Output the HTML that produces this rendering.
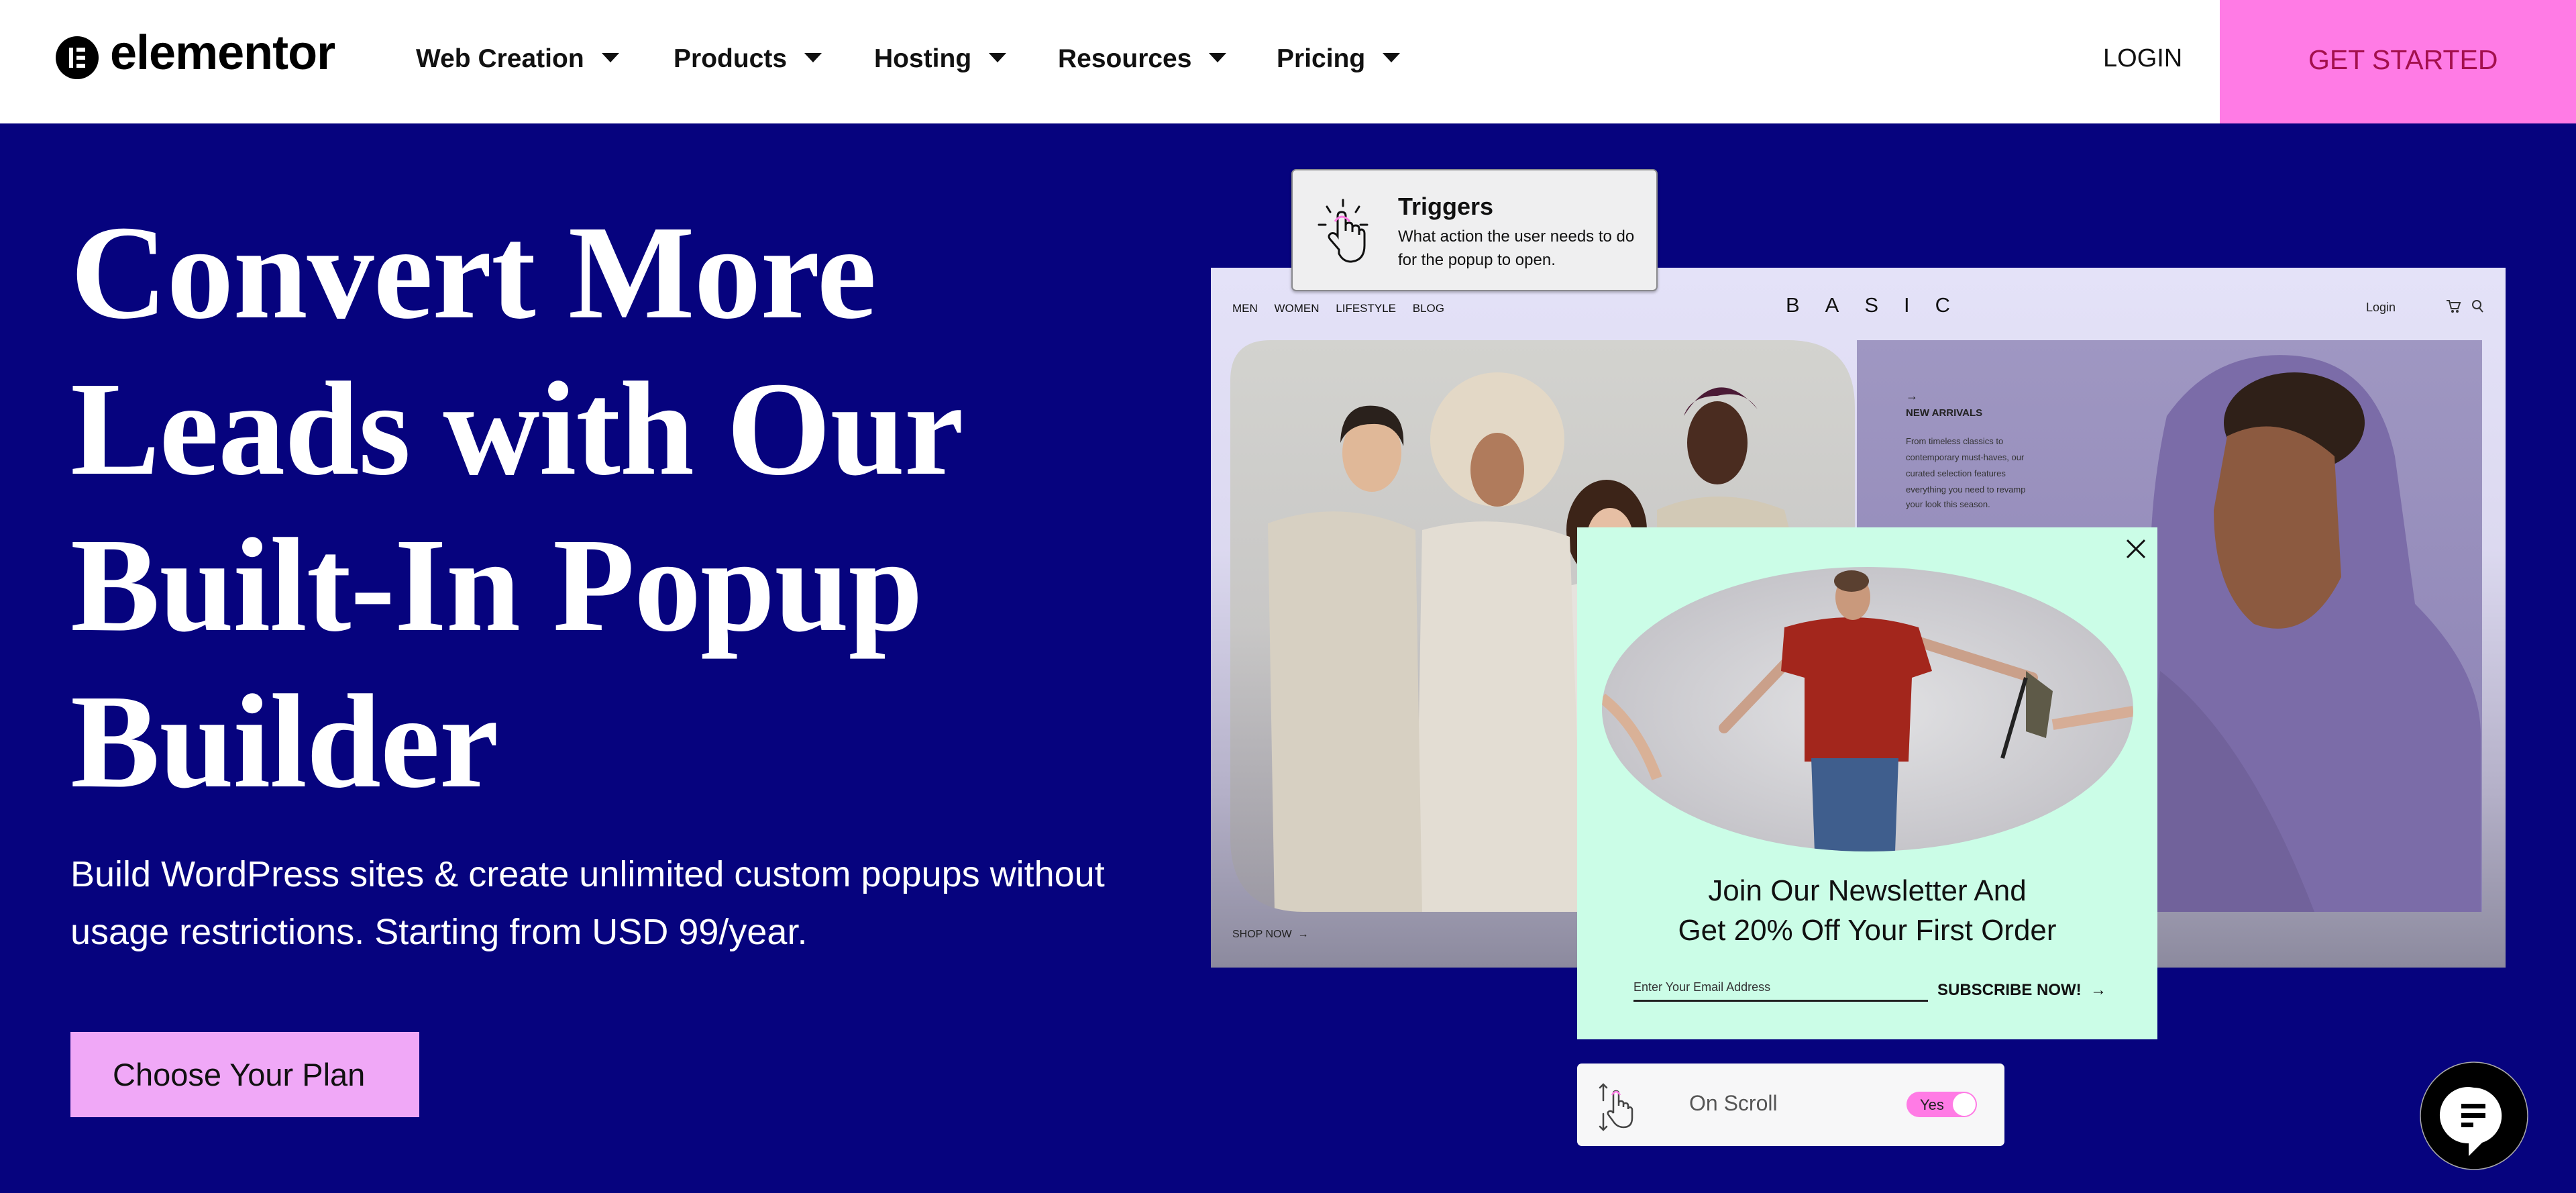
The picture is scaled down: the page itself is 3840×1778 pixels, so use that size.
<!DOCTYPE html>
<html><head><meta charset="utf-8">
<style>
*{margin:0;padding:0;box-sizing:border-box}
html,body{width:3840px;height:1778px;overflow:hidden;background:#06037e;font-family:"Liberation Sans",sans-serif}
.abs{position:absolute}
#hdr{position:absolute;left:0;top:0;width:3840px;height:184px;background:#fff}
.nav{position:absolute;top:66px;font-size:39px;font-weight:bold;color:#111;white-space:nowrap}
.caret{display:inline-block;width:0;height:0;border-left:13px solid transparent;border-right:13px solid transparent;border-top:14px solid #111;margin-left:26px;vertical-align:middle;position:relative;top:-4px}
h1{position:absolute;left:105px;top:290px;font-family:"Liberation Serif",serif;font-weight:bold;font-size:200px;line-height:233px;color:#fff;letter-spacing:-1px}
.para{position:absolute;left:105px;top:1260px;font-size:54px;line-height:86px;color:#fff;width:1750px}
</style></head><body>
<div id="hdr">
  <svg class="abs" style="left:83px;top:54px" width="64" height="64" viewBox="0 0 64 64"><circle cx="32" cy="32" r="32" fill="#000"/><rect x="20" y="17" width="6" height="30" fill="#fff"/><rect x="31" y="17" width="13" height="6" fill="#fff"/><rect x="31" y="29" width="13" height="6" fill="#fff"/><rect x="31" y="41" width="13" height="6" fill="#fff"/></svg>
  <div class="abs" style="left:164px;top:38px;font-size:72px;font-weight:bold;letter-spacing:-1px;color:#000">elementor</div>
  <div class="nav" style="left:620px">Web Creation<span class="caret"></span></div>
  <div class="nav" style="left:1004px">Products<span class="caret"></span></div>
  <div class="nav" style="left:1303px">Hosting<span class="caret"></span></div>
  <div class="nav" style="left:1577px">Resources<span class="caret"></span></div>
  <div class="nav" style="left:1903px">Pricing<span class="caret"></span></div>
  <div class="abs" style="left:3135px;top:66px;font-size:38px;color:#111">LOGIN</div>
  <div class="abs" style="left:3309px;top:0;width:531px;height:184px;background:#ff7be5"></div>
  <div class="abs" style="left:3441px;top:66px;font-size:41px;color:#a3104d">GET STARTED</div>
</div>

<h1>Convert More<br>Leads with Our<br>Built-In Popup<br>Builder</h1>
<div class="para">Build WordPress sites &amp; create unlimited custom popups without<br>usage restrictions. Starting from USD 99/year.</div>
<div class="abs" style="left:105px;top:1538px;width:520px;height:127px;background:#f0a8f7"></div>
<div class="abs" style="left:168px;top:1574px;font-size:47px;color:#111">Choose Your Plan</div>

<!-- site mockup -->
<div class="abs" style="left:1805px;top:399px;width:1930px;height:1043px;background:linear-gradient(#e4e2f8,#dcd9f0 40%,#b4b0c8 75%,#8c8a9e)"></div>
<div class="abs" style="left:1837px;top:450px;font-size:17px;color:#111;word-spacing:20px">MEN WOMEN LIFESTYLE BLOG</div>
<div class="abs" style="left:2662px;top:437px;font-size:31px;color:#111;letter-spacing:38px">BASIC</div>
<div class="abs" style="left:3527px;top:448px;font-size:18px;color:#222">Login</div>
<svg class="abs" style="left:3645px;top:444px" width="60" height="26" viewBox="0 0 60 26"><path d="M2 4h4l3 12h10l3-9H8" fill="none" stroke="#333" stroke-width="2"/><circle cx="11" cy="20" r="2" fill="#333"/><circle cx="18" cy="20" r="2" fill="#333"/><circle cx="47" cy="10" r="6" fill="none" stroke="#333" stroke-width="2"/><path d="M51 15l5 6" stroke="#333" stroke-width="2"/></svg>

<svg class="abs" style="left:1834px;top:507px" width="1866" height="852" viewBox="1834 507 1866 852">
  <defs>
    <linearGradient id="lp" x1="0" y1="0" x2="0" y2="1"><stop offset="0" stop-color="#d3d3cf"/><stop offset=".5" stop-color="#c8c7c6"/><stop offset="1" stop-color="#9c99a4"/></linearGradient>
    <linearGradient id="rp" x1="0" y1="0" x2="0" y2="1"><stop offset="0" stop-color="#9f97c2"/><stop offset="1" stop-color="#8a80b3"/></linearGradient>
    <clipPath id="lc"><path d="M1894 507H2665Q2765 507 2765 607V1359H1944Q1834 1359 1834 1249V567Q1834 507 1894 507Z"/></clipPath>
  </defs>
  <g clip-path="url(#lc)">
    <rect x="1834" y="507" width="931" height="852" fill="url(#lp)"/>
    <path d="M2470 760Q2560 720 2660 760L2720 1000L2700 1359H2470Z" fill="#d2c9b6"/>
    <ellipse cx="2560" cy="660" rx="45" ry="62" fill="#4a2c20"/>
    <path d="M2510 620Q2560 540 2620 610Q2600 580 2560 590Q2520 590 2510 620Z" fill="#4a1a35"/>
    <path d="M2320 880Q2390 850 2470 890V1359H2320Z" fill="#e6e3de"/>
    <ellipse cx="2395" cy="790" rx="60" ry="75" fill="#3c2418"/>
    <ellipse cx="2400" cy="805" rx="35" ry="48" fill="#e6bfa4"/>
    <path d="M2120 790Q2230 760 2340 800L2360 1359H2110Z" fill="#e3ddd3"/>
    <circle cx="2232" cy="655" r="100" fill="#e3d8c6"/>
    <ellipse cx="2232" cy="700" rx="40" ry="55" fill="#b07b5c"/>
    <path d="M1890 780Q2000 740 2110 790L2120 1359H1900Z" fill="#d7d0c2"/>
    <ellipse cx="2045" cy="675" rx="44" ry="58" fill="#e0b898"/>
    <path d="M1998 660Q2000 600 2050 605Q2095 610 2092 665Q2080 630 2045 632Q2010 632 1998 660Z" fill="#2a211c"/>
  </g>
  <rect x="2768" y="507" width="932" height="852" fill="url(#rp)"/>
  <path d="M3230 620Q3300 520 3420 530Q3540 540 3570 680L3600 900Q3700 1000 3698 1100V1359H3190L3215 1000Q3190 800 3230 620Z" fill="#7b6ca8"/>
  <path d="M3220 1000Q3350 1100 3450 1359H3190Z" fill="#6d5e95" opacity=".7"/>
  <ellipse cx="3420" cy="630" rx="105" ry="75" fill="#2f2018"/>
  <path d="M3320 650Q3400 610 3480 680L3490 860Q3440 960 3360 930Q3300 880 3300 760Z" fill="#8c5a40"/>
  <text x="2841" y="596" font-family="Liberation Sans" font-size="18" fill="#222">→</text>
  <text x="2841" y="620" font-family="Liberation Sans" font-size="15" font-weight="bold" fill="#222">NEW ARRIVALS</text>
  <g font-family="Liberation Sans" font-size="13" fill="#333">
    <text x="2841" y="662">From timeless classics to</text>
    <text x="2841" y="686">contemporary must-haves, our</text>
    <text x="2841" y="710">curated selection features</text>
    <text x="2841" y="734">everything you need to revamp</text>
    <text x="2841" y="756">your look this season.</text>
  </g>
</svg>
<div class="abs" style="left:1837px;top:1384px;font-size:16px;color:#222">SHOP NOW &nbsp;→</div>

<!-- triggers card -->
<div class="abs" style="left:1925px;top:252px;width:546px;height:182px;background:#efeff0;border:2px solid #8a8a8e;border-radius:7px;box-shadow:0 2px 4px rgba(0,0,0,.3)"></div>
<svg class="abs" style="left:1960px;top:292px" width="84" height="104" viewBox="0 0 84 104"><g stroke="#111" stroke-width="3" fill="none" stroke-linecap="round"><path d="M42 6v9M18 16l5 8M66 16l-5 8M6 43h10M68 43h10"/><path d="M36 80L24 66Q18 60 24 56Q30 54 34 60V30Q34 24 40 24Q46 24 46 30V52V44Q46 40 51 40Q56 40 56 45V54V48Q56 44 61 44Q66 44 66 49V58V54Q66 50 70 50Q74 51 74 56V74Q74 96 54 98Q42 98 36 86Z"/></g><path d="M30 38Q40 24 52 38" stroke="#ff7be5" stroke-width="3" fill="none"/></svg>
<div class="abs" style="left:2084px;top:287px;font-size:36px;font-weight:bold;color:#111">Triggers</div>
<div class="abs" style="left:2084px;top:335px;font-size:24px;line-height:35px;color:#111">What action the user needs to do<br>for the popup to open.</div>

<!-- popup -->
<div class="abs" style="left:2351px;top:786px;width:865px;height:763px;background:#cbfde7"></div>
<svg class="abs" style="left:3168px;top:802px" width="32" height="32" viewBox="0 0 32 32"><path d="M3 3L29 29M29 3L3 29" stroke="#111" stroke-width="3"/></svg>
<svg class="abs" style="left:2388px;top:845px" width="792" height="425" viewBox="2388 845 792 425">
  <defs><clipPath id="ec"><ellipse cx="2784" cy="1057" rx="396" ry="212"/></clipPath>
  <radialGradient id="eg"><stop offset="0" stop-color="#e2e2e4"/><stop offset="1" stop-color="#c6c5ca"/></radialGradient></defs>
  <g clip-path="url(#ec)">
    <rect x="2388" y="845" width="792" height="425" fill="url(#eg)"/>
    <path d="M2388 1040Q2440 1080 2470 1160" stroke="#d9b197" stroke-width="16" fill="none"/>
    <path d="M2675 975L2570 1085" stroke="#caa08a" stroke-width="16" stroke-linecap="round"/>
    <path d="M2855 955L3030 1010" stroke="#caa08a" stroke-width="16" stroke-linecap="round"/>
    <path d="M3060 1080L3180 1060" stroke="#d6ad96" stroke-width="16"/>
    <path d="M2660 935Q2760 905 2860 935L2880 1000L2850 1010L2845 1135H2690L2690 1010L2655 1000Z" fill="#a3261c"/>
    <path d="M2700 1130H2830L2825 1270H2705Z" fill="#3f5e8d"/>
    <ellipse cx="2762" cy="890" rx="26" ry="34" fill="#c9997c"/>
    <ellipse cx="2760" cy="866" rx="26" ry="16" fill="#5a4030"/>
    <path d="M3020 1000L3060 1030L3050 1100L3020 1090Z" fill="#5e5a48"/>
    <path d="M3020 1010L2985 1130" stroke="#222" stroke-width="6"/>
  </g>
</svg>
<div class="abs" style="left:2351px;top:1298px;width:865px;text-align:center;font-size:44px;line-height:59px;color:#111">Join Our Newsletter And<br>Get 20% Off Your First Order</div>
<div class="abs" style="left:2435px;top:1461px;font-size:18px;color:#333">Enter Your Email Address</div>
<div class="abs" style="left:2435px;top:1490px;width:439px;height:3px;background:#222"></div>
<div class="abs" style="left:2888px;top:1462px;font-size:24px;font-weight:bold;color:#111">SUBSCRIBE NOW! &nbsp;→</div>

<!-- on scroll card -->
<div class="abs" style="left:2351px;top:1585px;width:637px;height:123px;background:#f7f7f8;border-radius:7px"></div>
<svg class="abs" style="left:2382px;top:1612px" width="56" height="76" viewBox="0 0 56 76"><g stroke="#444" stroke-width="2.5" fill="none" stroke-linecap="round"><path d="M8 4v24M3 9l5-5 5 5M8 48v24M3 67l5 5 5-5"/><path d="M22 58L16 50Q13 46 17 44Q21 43 23 47V18Q23 14 27 14Q31 14 31 18V36V32Q31 29 34 29Q38 29 38 32V38V35Q38 32 41 32Q45 32 45 36V41Q45 38 48 38Q51 39 51 42V54Q51 68 38 68Q28 68 22 58Z"/></g><path d="M21 20Q27 10 33 20" stroke="#ff7be5" stroke-width="2.5" fill="none"/></svg>
<div class="abs" style="left:2518px;top:1626px;font-size:32px;color:#555">On Scroll</div>
<div class="abs" style="left:2842px;top:1627px;width:105px;height:38px;background:#ff7be5;border-radius:19px"></div>
<div class="abs" style="left:2911px;top:1629px;width:34px;height:34px;background:#fff;border-radius:50%"></div>
<div class="abs" style="left:2862px;top:1634px;font-size:22px;color:#222">Yes</div>

<!-- chat -->
<svg class="abs" style="left:3604px;top:1579px" width="168" height="168" viewBox="0 0 168 168"><circle cx="84" cy="84" r="80" fill="#000" stroke="#aaa" stroke-width="1.5"/><path d="M84 42A42 42 0 1 0 76 125L76 144L96 124A42 42 0 0 0 84 42Z" fill="#fff"/><rect x="65" y="66" width="36" height="7" fill="#000"/><rect x="65" y="80" width="36" height="7" fill="#000"/><rect x="65" y="94" width="18" height="7" fill="#000"/></svg>
</body></html>
